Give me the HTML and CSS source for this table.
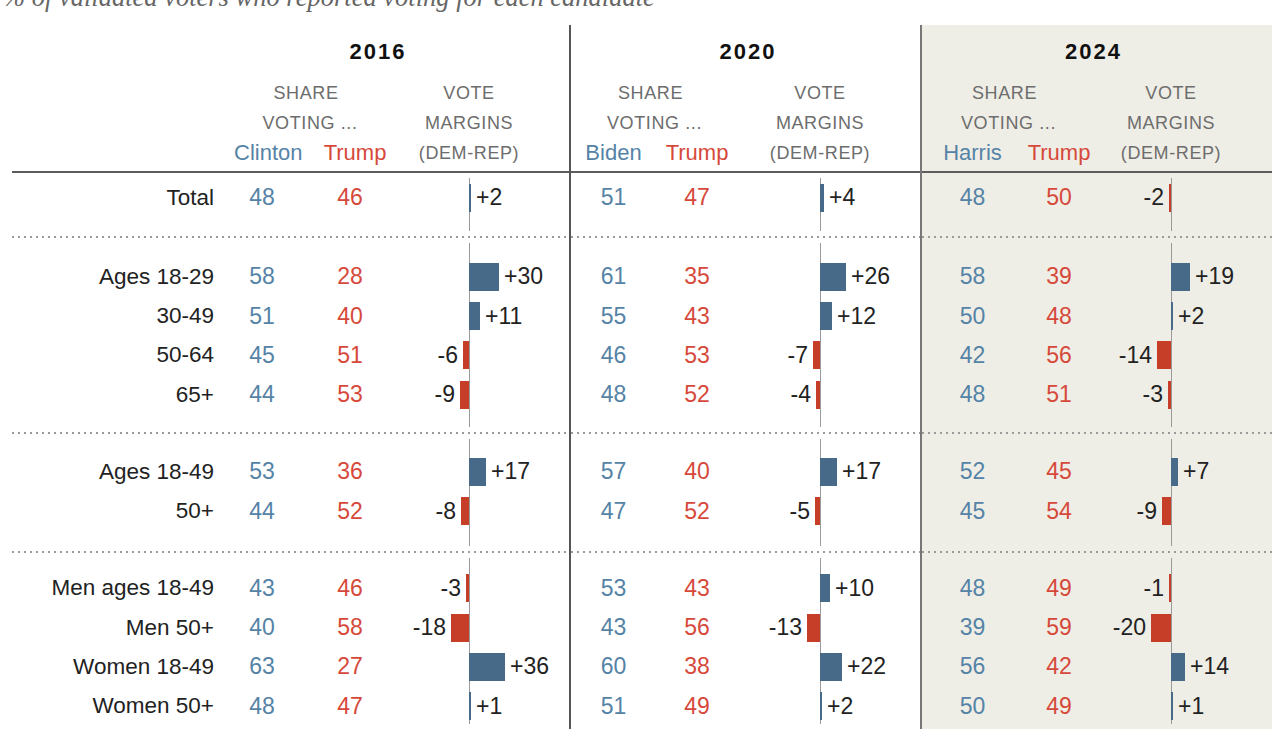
FILE: index.html
```html
<!DOCTYPE html>
<html lang="en">
<head>
<meta charset="utf-8">
<title>Validated voters by age and gender</title>
<link rel="stylesheet" href="styles.css">
</head>
<body>
<div class="caption">% of validated voters who reported voting for each candidate</div>
<div class="table">
  <div class="col labels">
    <div class="head"></div>
    <div class="group gt">
      <div class="row">Total</div>
    </div>
    <div class="sep"></div>
    <div class="group g1">
      <div class="row">Ages 18-29</div>
      <div class="row">30-49</div>
      <div class="row">50-64</div>
      <div class="row">65+</div>
    </div>
    <div class="sep"></div>
    <div class="group g2">
      <div class="row">Ages 18-49</div>
      <div class="row">50+</div>
    </div>
    <div class="sep"></div>
    <div class="group g3">
      <div class="row">Men ages 18-49</div>
      <div class="row">Men 50+</div>
      <div class="row">Women 18-49</div>
      <div class="row">Women 50+</div>
    </div>
  </div>

  <div class="col sec s16">
    <div class="head">
      <div class="year">2016</div>
      <div class="subhead">
        <div class="share">
          <div class="l1">SHARE</div>
          <div>VOTING ...</div>
          <div class="names"><span class="d">Clinton</span><span class="r">Trump</span></div>
        </div>
        <div class="vote">VOTE<br>MARGINS<br>(DEM-REP)</div>
      </div>
    </div>
    <div class="group gt">
      <div class="row"><span class="n d">48</span><span class="n r">46</span><div class="neg"></div><div class="pos"><i class="bar d" style="width:2px"></i><span class="ml">+2</span></div></div>
    </div>
    <div class="sep"></div>
    <div class="group g1">
      <div class="row"><span class="n d">58</span><span class="n r">28</span><div class="neg"></div><div class="pos"><i class="bar d" style="width:30px"></i><span class="ml">+30</span></div></div>
      <div class="row"><span class="n d">51</span><span class="n r">40</span><div class="neg"></div><div class="pos"><i class="bar d" style="width:11px"></i><span class="ml">+11</span></div></div>
      <div class="row"><span class="n d">45</span><span class="n r">51</span><div class="neg"><span class="ml">-6</span><i class="bar r" style="width:6px"></i></div><div class="pos"></div></div>
      <div class="row"><span class="n d">44</span><span class="n r">53</span><div class="neg"><span class="ml">-9</span><i class="bar r" style="width:9px"></i></div><div class="pos"></div></div>
    </div>
    <div class="sep"></div>
    <div class="group g2">
      <div class="row"><span class="n d">53</span><span class="n r">36</span><div class="neg"></div><div class="pos"><i class="bar d" style="width:17px"></i><span class="ml">+17</span></div></div>
      <div class="row"><span class="n d">44</span><span class="n r">52</span><div class="neg"><span class="ml">-8</span><i class="bar r" style="width:8px"></i></div><div class="pos"></div></div>
    </div>
    <div class="sep"></div>
    <div class="group g3">
      <div class="row"><span class="n d">43</span><span class="n r">46</span><div class="neg"><span class="ml">-3</span><i class="bar r" style="width:3px"></i></div><div class="pos"></div></div>
      <div class="row"><span class="n d">40</span><span class="n r">58</span><div class="neg"><span class="ml">-18</span><i class="bar r" style="width:18px"></i></div><div class="pos"></div></div>
      <div class="row"><span class="n d">63</span><span class="n r">27</span><div class="neg"></div><div class="pos"><i class="bar d" style="width:36px"></i><span class="ml">+36</span></div></div>
      <div class="row"><span class="n d">48</span><span class="n r">47</span><div class="neg"></div><div class="pos"><i class="bar d" style="width:1px"></i><span class="ml">+1</span></div></div>
    </div>
  </div>

  <div class="col sec s20">
    <div class="head">
      <div class="year">2020</div>
      <div class="subhead">
        <div class="share">
          <div class="l1">SHARE</div>
          <div>VOTING ...</div>
          <div class="names"><span class="d">Biden</span><span class="r">Trump</span></div>
        </div>
        <div class="vote">VOTE<br>MARGINS<br>(DEM-REP)</div>
      </div>
    </div>
    <div class="group gt">
      <div class="row"><span class="n d">51</span><span class="n r">47</span><div class="neg"></div><div class="pos"><i class="bar d" style="width:4px"></i><span class="ml">+4</span></div></div>
    </div>
    <div class="sep"></div>
    <div class="group g1">
      <div class="row"><span class="n d">61</span><span class="n r">35</span><div class="neg"></div><div class="pos"><i class="bar d" style="width:26px"></i><span class="ml">+26</span></div></div>
      <div class="row"><span class="n d">55</span><span class="n r">43</span><div class="neg"></div><div class="pos"><i class="bar d" style="width:12px"></i><span class="ml">+12</span></div></div>
      <div class="row"><span class="n d">46</span><span class="n r">53</span><div class="neg"><span class="ml">-7</span><i class="bar r" style="width:7px"></i></div><div class="pos"></div></div>
      <div class="row"><span class="n d">48</span><span class="n r">52</span><div class="neg"><span class="ml">-4</span><i class="bar r" style="width:4px"></i></div><div class="pos"></div></div>
    </div>
    <div class="sep"></div>
    <div class="group g2">
      <div class="row"><span class="n d">57</span><span class="n r">40</span><div class="neg"></div><div class="pos"><i class="bar d" style="width:17px"></i><span class="ml">+17</span></div></div>
      <div class="row"><span class="n d">47</span><span class="n r">52</span><div class="neg"><span class="ml">-5</span><i class="bar r" style="width:5px"></i></div><div class="pos"></div></div>
    </div>
    <div class="sep"></div>
    <div class="group g3">
      <div class="row"><span class="n d">53</span><span class="n r">43</span><div class="neg"></div><div class="pos"><i class="bar d" style="width:10px"></i><span class="ml">+10</span></div></div>
      <div class="row"><span class="n d">43</span><span class="n r">56</span><div class="neg"><span class="ml">-13</span><i class="bar r" style="width:13px"></i></div><div class="pos"></div></div>
      <div class="row"><span class="n d">60</span><span class="n r">38</span><div class="neg"></div><div class="pos"><i class="bar d" style="width:22px"></i><span class="ml">+22</span></div></div>
      <div class="row"><span class="n d">51</span><span class="n r">49</span><div class="neg"></div><div class="pos"><i class="bar d" style="width:2px"></i><span class="ml">+2</span></div></div>
    </div>
  </div>

  <div class="col sec s24">
    <div class="head">
      <div class="year">2024</div>
      <div class="subhead">
        <div class="share">
          <div class="l1">SHARE</div>
          <div>VOTING ...</div>
          <div class="names"><span class="d">Harris</span><span class="r">Trump</span></div>
        </div>
        <div class="vote">VOTE<br>MARGINS<br>(DEM-REP)</div>
      </div>
    </div>
    <div class="group gt">
      <div class="row"><span class="n d">48</span><span class="n r">50</span><div class="neg"><span class="ml">-2</span><i class="bar r" style="width:2px"></i></div><div class="pos"></div></div>
    </div>
    <div class="sep"></div>
    <div class="group g1">
      <div class="row"><span class="n d">58</span><span class="n r">39</span><div class="neg"></div><div class="pos"><i class="bar d" style="width:19px"></i><span class="ml">+19</span></div></div>
      <div class="row"><span class="n d">50</span><span class="n r">48</span><div class="neg"></div><div class="pos"><i class="bar d" style="width:2px"></i><span class="ml">+2</span></div></div>
      <div class="row"><span class="n d">42</span><span class="n r">56</span><div class="neg"><span class="ml">-14</span><i class="bar r" style="width:14px"></i></div><div class="pos"></div></div>
      <div class="row"><span class="n d">48</span><span class="n r">51</span><div class="neg"><span class="ml">-3</span><i class="bar r" style="width:3px"></i></div><div class="pos"></div></div>
    </div>
    <div class="sep"></div>
    <div class="group g2">
      <div class="row"><span class="n d">52</span><span class="n r">45</span><div class="neg"></div><div class="pos"><i class="bar d" style="width:7px"></i><span class="ml">+7</span></div></div>
      <div class="row"><span class="n d">45</span><span class="n r">54</span><div class="neg"><span class="ml">-9</span><i class="bar r" style="width:9px"></i></div><div class="pos"></div></div>
    </div>
    <div class="sep"></div>
    <div class="group g3">
      <div class="row"><span class="n d">48</span><span class="n r">49</span><div class="neg"><span class="ml">-1</span><i class="bar r" style="width:1px"></i></div><div class="pos"></div></div>
      <div class="row"><span class="n d">39</span><span class="n r">59</span><div class="neg"><span class="ml">-20</span><i class="bar r" style="width:20px"></i></div><div class="pos"></div></div>
      <div class="row"><span class="n d">56</span><span class="n r">42</span><div class="neg"></div><div class="pos"><i class="bar d" style="width:14px"></i><span class="ml">+14</span></div></div>
      <div class="row"><span class="n d">50</span><span class="n r">49</span><div class="neg"></div><div class="pos"><i class="bar d" style="width:1px"></i><span class="ml">+1</span></div></div>
    </div>
  </div>
</div>
</body>
</html>
```
FILE: styles.css
```css
* { box-sizing: border-box; }
html, body { margin: 0; padding: 0; background: #fff; }
body {
  font-family: "Liberation Sans", Arial, sans-serif;
  color: #222;
  overflow: hidden;
}

.caption {
  font-family: "Liberation Serif", "Times New Roman", serif;
  font-style: italic;
  font-size: 26.5px;
  line-height: 24px;
  height: 24px;
  color: #666;
  padding-left: 3px;
  white-space: nowrap;
  position: relative;
  top: -15px;
}

.table {
  display: flex;
  margin-top: 1px;
  padding-left: 12px;
}

.col { display: flex; flex-direction: column; }

.head {
  height: 148px;
  border-bottom: 2px solid #5c5c5c;
  padding-top: 12px;
}

.labels { width: 210px; }
.labels .row {
  justify-content: flex-end;
  padding-right: 8px;
  font-size: 22.5px;
}

.row {
  height: 39.25px;
  display: flex;
  align-items: center;
}

.s16 { width: 347px; --a: 80px; --b: 96px; --n: 71px; --ax: 247px; }
.s20 { width: 351px; border-left: 2px solid #555; --a: 85px; --b: 82px; --n: 82px; --ax: 249px; }
.s24 { width: 352px; border-left: 2px solid #777; background: #efeee6; --a: 101px; --b: 72px; --n: 76px; --ax: 249px; }

.year {
  font-weight: bold;
  font-size: 22px;
  line-height: 30px;
  letter-spacing: 2px;
  text-align: center;
  color: #111;
}
.s16 .year { padding-right: 35px; }
.s20 .year { padding-left: 5px; }
.s24 .year { padding-right: 7px; }

.subhead {
  margin-top: 11px;
  display: grid;
  grid-template-columns: calc(var(--a) + var(--b)) calc(var(--n) * 2);
}

.share, .vote {
  font-size: 18px;
  line-height: 30px;
  letter-spacing: 0.6px;
  color: #6d6d6d;
  text-align: center;
  white-space: nowrap;
}
.share .l1 { padding-right: 8px; }

.names {
  display: grid;
  grid-template-columns: var(--a) var(--b);
  font-size: 22px;
  letter-spacing: 0;
}
.s16 .names .d { padding-left: 12px; }
.s16 .names .r { padding-left: 10px; }

.d { color: #5583a6; }
.r { color: #d6493a; }

.sec .row {
  display: grid;
  grid-template-columns: var(--a) var(--b) var(--n) 1fr;
  align-items: center;
  font-size: 23px;
}

.n { text-align: center; }

.neg, .pos {
  display: flex;
  align-items: center;
  gap: 5px;
}
.neg { justify-content: flex-end; }

.bar {
  display: block;
  height: 28px;
  min-width: 2px;
  flex: none;
}
.bar.d { background: #466a87; }
.bar.r { background: #c63d28; }

.ml { color: #222; font-size: 23px; }

.group {
  background-image: linear-gradient(#9a9a9a, #9a9a9a);
  background-repeat: no-repeat;
  background-size: 1px calc(100% - 10px);
  background-position: var(--ax) 5px;
}
.labels .group { background-image: none; }

.gt { padding: 5px 0 19px; }
.g1 { padding: 19px 0 18px; }
.g2 { padding: 18px 0 20px; }
.g3 { padding: 16px 0 3px; }

.sep {
  height: 2px;
  background-image: linear-gradient(to right, #9a9a9a 2px, transparent 2px);
  background-size: 6px 2px;
}
```
